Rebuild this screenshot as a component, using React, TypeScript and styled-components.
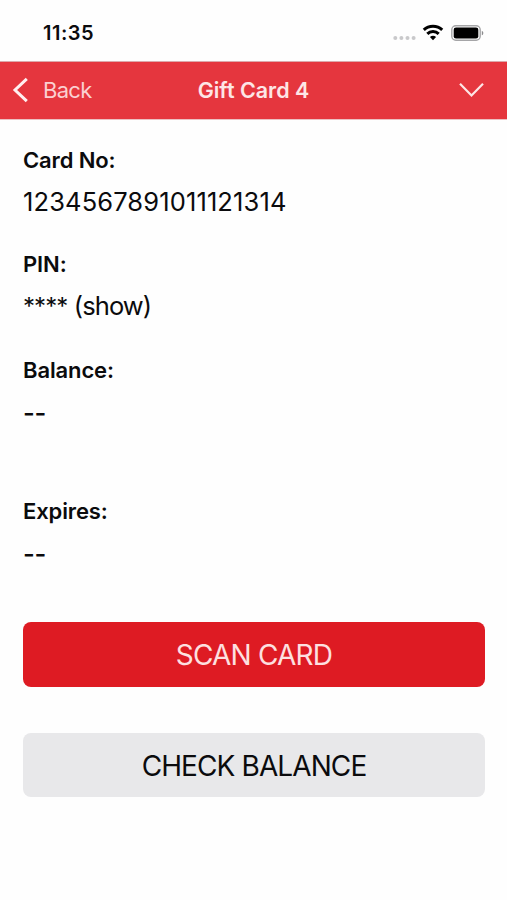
import React from "react";
import styled, { createGlobalStyle } from "styled-components";

const GlobalStyle = createGlobalStyle`
  * { box-sizing: border-box; }
  body { margin: 0; background: #fefefe; font-family: Inter, "Liberation Sans", sans-serif; color: #0b0b0d; }
`;

const Screen = styled.div`
  width: 507px;
  height: 900px;
  display: flex;
  flex-direction: column;
  overflow: hidden;
`;

const StatusBar = styled.div`
  height: 62px;
  flex: none;
  display: flex;
  justify-content: space-between;
  padding: 0 23px 0 43px;
`;

const Time = styled.span`
  font-size: 20px;
  font-weight: 600;
  line-height: 66px;
  letter-spacing: 0.5px;
`;

const StatusIcons = styled.svg`
  display: block;
  width: 92px;
  height: 20px;
  margin-top: 23px;
`;

const NavBar = styled.header`
  height: 56.5px;
  flex: none;
  display: grid;
  grid-template-columns: 1fr auto 1fr;
  align-items: center;
  padding: 0 23px 0 23px;
  background: #e5363e;
  box-shadow: 0 -0.5px 0 #b9565b, 0 0.5px 0 #d98286;
  color: #fde6e6;
`;

const PlainButton = styled.button`
  display: flex;
  align-items: center;
  border: 0;
  padding: 0;
  background: none;
  font-family: inherit;
`;

const BackButton = styled(PlainButton)`
  gap: 13px;
  margin-left: -11px;
  font-size: 22px;
  line-height: 30px;
  letter-spacing: -0.7px;
  color: #fbd0d1;
`;

const MenuButton = styled(PlainButton)`
  justify-self: end;
`;

const Title = styled.h1`
  margin: 0;
  font-size: 21.5px;
  font-weight: 600;
  line-height: 30px;
  white-space: nowrap;
`;

const Content = styled.main`
  display: flex;
  flex-direction: column;
  padding: 21px 22px 0 23px;
`;

const Field = styled.section<{ $after: number }>`
  margin-bottom: ${(p) => p.$after}px;
`;

const Label = styled.div`
  font-size: 22px;
  font-weight: 600;
  line-height: 41px;
  letter-spacing: -0.12px;
`;

const Value = styled.div<{ $spacing?: number }>`
  height: 41.5px;
  font-size: 25.5px;
  line-height: 41.5px;
  letter-spacing: ${(p) => p.$spacing ?? 0}px;
`;

const EmptyValue = styled(Value)`
  font-weight: 500;
  line-height: 43px;
`;

const Mask = styled.span`
  font-size: 24px;
  letter-spacing: -0.9px;
`;

const ActionButton = styled.button<{ $primary?: boolean }>`
  height: 64.5px;
  margin-bottom: 46px;
  border: 0;
  border-radius: 8px;
  padding: 2px 0 0;
  font-family: inherit;
  font-size: 28px;
  background: ${(p) => (p.$primary ? "#de1b23" : "#e8e8ea")};
  color: ${(p) => (p.$primary ? "#fde0e0" : "#0b0b0d")};
  letter-spacing: ${(p) => (p.$primary ? -0.8 : -0.9)}px;
`;

export default function App() {
  return (
    <Screen>
      <GlobalStyle />
      <StatusBar>
        <Time>11:35</Time>
        <StatusIcons viewBox="0 0 92 20">
          <g fill="#c9c9cb">
            <circle cx="3.3" cy="15" r="2" />
            <circle cx="9.4" cy="15" r="2" />
            <circle cx="15.5" cy="15" r="2" />
            <circle cx="21.6" cy="15" r="2" />
          </g>
          <g fill="none" stroke="#000" strokeWidth="3">
            <path d="M31.8 6.9a13.3 13.3 0 0 1 18.4 0" />
            <path d="M35.3 10.9a8.2 8.2 0 0 1 11.4 0" />
          </g>
          <path d="M41 17.2l-3.1-3.1a4.5 4.5 0 0 1 6.2 0z" />
          <rect x="59.8" y="2.7" width="28.4" height="14.6" rx="4" fill="#fff" stroke="#a5a5a7" strokeWidth="1.4" />
          <rect x="61.7" y="4.5" width="24.6" height="11" rx="2.3" />
          <path d="M89.8 7.7c2 .8 2 3.8 0 4.6z" fill="#8d8d8f" />
        </StatusIcons>
      </StatusBar>
      <NavBar>
        <BackButton>
          <svg width="18" height="26" viewBox="0 0 18 26" fill="none" stroke="#fff0f0" strokeWidth="3">
            <path d="M14.8 1.8L3 13l11.8 11.2" />
          </svg>
          Back
        </BackButton>
        <Title>Gift Card 4</Title>
        <MenuButton aria-label="Menu">
          <svg width="25" height="16" viewBox="0 0 25 16" fill="none" stroke="#fde6e6" strokeWidth="2.2">
            <path d="M1 1.8l11.5 11.7L24 1.8" />
          </svg>
        </MenuButton>
      </NavBar>
      <Content>
        <Field $after={21.5}>
          <Label>Card No:</Label>
          <Value $spacing={0.12}>1234567891011121314</Value>
        </Field>
        <Field $after={23.5}>
          <Label>PIN:</Label>
          <Value $spacing={-0.9}>
            <Mask>****</Mask> (show)
          </Value>
        </Field>
        <Field $after={59}>
          <Label>Balance:</Label>
          <EmptyValue $spacing={-0.3}>--</EmptyValue>
        </Field>
        <Field $after={48.5}>
          <Label>Expires:</Label>
          <EmptyValue $spacing={-0.3}>--</EmptyValue>
        </Field>
        <ActionButton $primary>SCAN CARD</ActionButton>
        <ActionButton>CHECK BALANCE</ActionButton>
      </Content>
    </Screen>
  );
}
